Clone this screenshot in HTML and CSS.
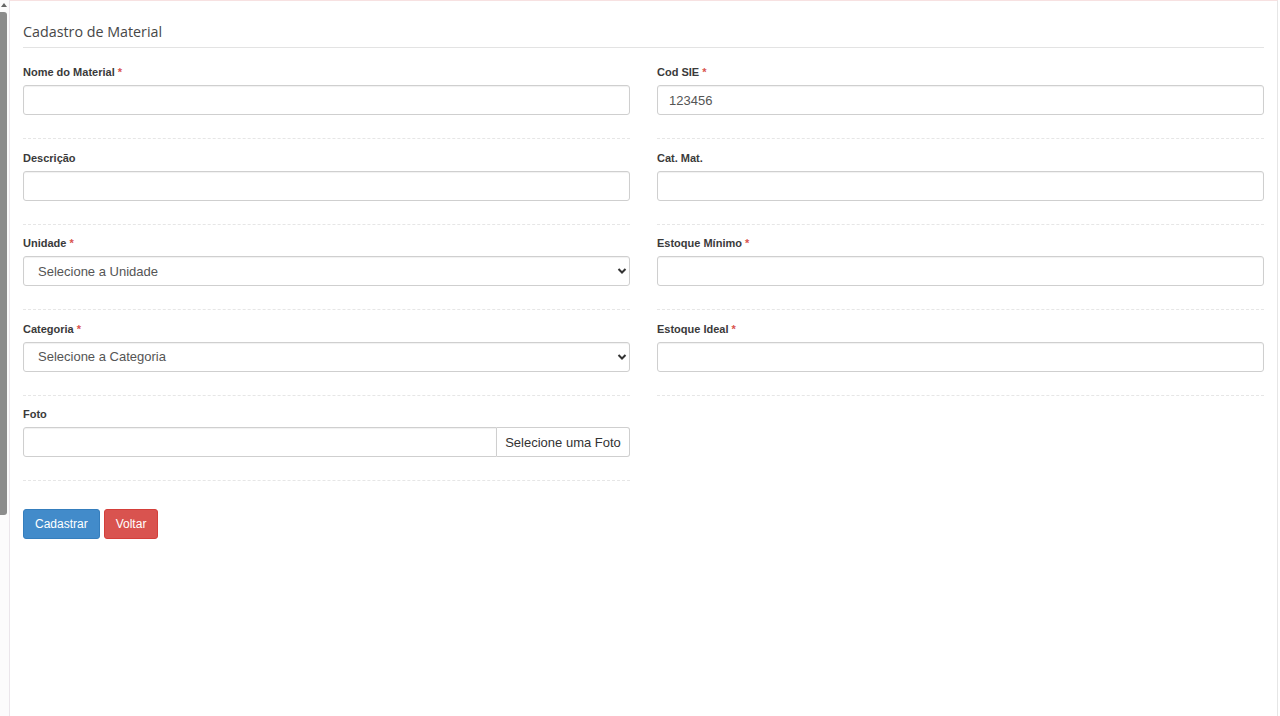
FILE: index.html
```html
<!DOCTYPE html>
<html lang="pt-BR">
<head>
    <meta charset="UTF-8">
    <meta name="viewport" content="width=device-width, initial-scale=1.0">
    <title>Cadastro de Material</title>
    <link rel="stylesheet" href="styles.css">
</head>
<body>
    <div class="scrollbar">
        <span class="scroll-arrow"></span>
        <span class="scroll-thumb"></span>
    </div>

    <div class="page">
        <h3 class="page-title">Cadastro de Material</h3>

        <form class="form-grid">
            <div class="field">
                <label>Nome do Material <span class="req">*</span></label>
                <input type="text" class="form-control">
                <hr class="sep">
            </div>
            <div class="field">
                <label>Cod SIE <span class="req">*</span></label>
                <input type="text" class="form-control" value="123456">
                <hr class="sep">
            </div>

            <div class="field">
                <label>Descrição</label>
                <input type="text" class="form-control">
                <hr class="sep">
            </div>
            <div class="field">
                <label>Cat. Mat.</label>
                <input type="text" class="form-control">
                <hr class="sep">
            </div>

            <div class="field">
                <label>Unidade <span class="req">*</span></label>
                <div class="select-wrap">
                    <select class="form-control">
                        <option>Selecione a Unidade</option>
                    </select>
                    <svg class="chevron" width="10" height="8" viewBox="0 0 10 8">
                        <path d="M1.5 2 L5 5.5 L8.5 2" fill="none" stroke="#333" stroke-width="2"/>
                    </svg>
                </div>
                <hr class="sep">
            </div>
            <div class="field">
                <label>Estoque Mínimo <span class="req">*</span></label>
                <input type="text" class="form-control">
                <hr class="sep">
            </div>

            <div class="field">
                <label>Categoria <span class="req">*</span></label>
                <div class="select-wrap">
                    <select class="form-control">
                        <option>Selecione a Categoria</option>
                    </select>
                    <svg class="chevron" width="10" height="8" viewBox="0 0 10 8">
                        <path d="M1.5 2 L5 5.5 L8.5 2" fill="none" stroke="#333" stroke-width="2"/>
                    </svg>
                </div>
                <hr class="sep">
            </div>
            <div class="field">
                <label>Estoque Ideal <span class="req">*</span></label>
                <input type="text" class="form-control">
                <hr class="sep">
            </div>

            <div class="field">
                <label>Foto</label>
                <div class="input-group">
                    <input type="text" class="form-control">
                    <button type="button" class="btn-file">Selecione uma Foto</button>
                </div>
                <hr class="sep">
            </div>
        </form>

        <div class="actions">
            <button type="button" class="btn btn-primary">Cadastrar</button>
            <button type="button" class="btn btn-danger">Voltar</button>
        </div>
    </div>
</body>
</html>
```

FILE: styles.css
```css
* {
    margin: 0;
    padding: 0;
    box-sizing: border-box;
}

body {
    display: flex;
    height: 716px;
    overflow: hidden;
    background-color: #fff;
    font-family: "Liberation Sans", Arial, sans-serif;
    color: #333;
}

.scrollbar {
    position: relative;
    flex: none;
    width: 10px;
    border-right: 1px solid #ebe5eb;
    background-color: #fcfbfc;
}

.scroll-arrow {
    position: absolute;
    top: 3px;
    left: 1px;
    border-left: 3px solid transparent;
    border-right: 3px solid transparent;
    border-bottom: 4px solid #666;
}

.scroll-thumb {
    position: absolute;
    top: 12px;
    left: 0;
    width: 7px;
    height: 503px;
    border-radius: 0 3px 3px 0;
    background-color: #8c8c8c;
}

.page {
    flex: 1;
    padding: 22px 13px 0 13px;
    border-top: 1px solid #f7e1e1;
    border-right: 1px solid #e6e6e6;
    margin-right: 2px;
}

.page-title {
    font-family: "Open Sans", sans-serif;
    font-size: 14.3px;
    font-weight: 500;
    color: #474747;
    line-height: 18px;
    padding-bottom: 6px;
    border-bottom: 1px solid #e3e3e3;
    margin-bottom: 16px;
}

.form-grid {
    display: grid;
    grid-template-columns: 607px 607px;
    column-gap: 27px;
}

.field label {
    display: block;
    font-size: 11px;
    font-weight: bold;
    line-height: 16px;
    color: #3a3a3a;
    margin-bottom: 5px;
}

.req {
    color: #d9534f;
}

.form-control {
    display: block;
    width: 100%;
    height: 30px;
    padding: 0 11px;
    font-family: "Liberation Sans", Arial, sans-serif;
    font-size: 13px;
    color: #555;
    background-color: #fff;
    border: 1px solid #cfcfcf;
    border-radius: 3px;
    box-shadow: inset 0 1px 1px rgba(0, 0, 0, 0.06);
    outline: none;
}

.select-wrap {
    position: relative;
}

.select-wrap select {
    appearance: none;
    -webkit-appearance: none;
    padding-left: 14px;
}

.chevron {
    position: absolute;
    right: 3px;
    top: 11px;
}

.input-group {
    display: flex;
}

.input-group .form-control {
    border-radius: 3px 0 0 3px;
}

.btn-file {
    flex: none;
    width: 133px;
    height: 30px;
    font-family: "Liberation Sans", Arial, sans-serif;
    font-size: 13px;
    color: #333;
    background-color: #fff;
    border: 1px solid #cfcfcf;
    border-left: none;
    border-radius: 0 3px 3px 0;
}

.sep {
    border: none;
    border-top: 1px dashed #e6e6e6;
    margin: 23px 0 10.5px;
}

.actions {
    display: flex;
    gap: 4px;
    margin-top: 17px;
}

.btn {
    height: 30px;
    padding: 0 11px;
    font-family: "Liberation Sans", Arial, sans-serif;
    font-size: 12px;
    color: #fff;
    border-radius: 3px;
    cursor: pointer;
}

.btn-primary {
    background-color: #428bca;
    border: 1px solid #357ebd;
}

.btn-danger {
    background-color: #d9534f;
    border: 1px solid #d43f3a;
}
```
